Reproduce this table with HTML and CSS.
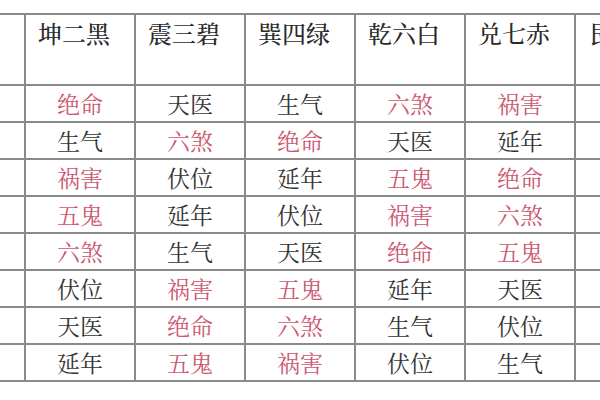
FILE: index.html
```html
<!DOCTYPE html>
<html lang="zh">
<head>
<meta charset="utf-8">
<link rel="stylesheet" href="styles.css">
</head>
<body>
<div class="sheet">
<table class="grid">
<colgroup>
<col class="c"><col class="c"><col class="c"><col class="c"><col class="c"><col class="c"><col class="c">
</colgroup>
<thead>
<tr class="head"><th></th><th>坤二黑</th><th>震三碧</th><th>巽四绿</th><th>乾六白</th><th>兑七赤</th><th>艮八白</th></tr>
</thead>
<tbody>
<tr><td></td><td class="bad">绝命</td><td>天医</td><td>生气</td><td class="bad">六煞</td><td class="bad">祸害</td><td></td></tr>
<tr><td></td><td>生气</td><td class="bad">六煞</td><td class="bad">绝命</td><td>天医</td><td>延年</td><td></td></tr>
<tr><td></td><td class="bad">祸害</td><td>伏位</td><td>延年</td><td class="bad">五鬼</td><td class="bad">绝命</td><td></td></tr>
<tr><td></td><td class="bad">五鬼</td><td>延年</td><td>伏位</td><td class="bad">祸害</td><td class="bad">六煞</td><td></td></tr>
<tr><td></td><td class="bad">六煞</td><td>生气</td><td>天医</td><td class="bad">绝命</td><td class="bad">五鬼</td><td></td></tr>
<tr><td></td><td>伏位</td><td class="bad">祸害</td><td class="bad">五鬼</td><td>延年</td><td>天医</td><td></td></tr>
<tr><td></td><td>天医</td><td class="bad">绝命</td><td class="bad">六煞</td><td>生气</td><td>伏位</td><td></td></tr>
<tr><td></td><td>延年</td><td class="bad">五鬼</td><td class="bad">祸害</td><td>伏位</td><td>生气</td><td></td></tr>
</tbody>
</table>
</div>
</body>
</html>
```
FILE: styles.css
```css
html, body {
  margin: 0;
  padding: 0;
  background: #fff;
}
.sheet {
  width: 600px;
  height: 400px;
  overflow: hidden;
  padding-top: 13px;
  box-sizing: border-box;
}
.grid {
  margin-left: -86px;
  border-collapse: collapse;
  table-layout: fixed;
  width: 770px;
  font-family: "Noto Serif CJK SC", "Noto Sans CJK SC", serif;
  color: #333;
}
.grid .c {
  width: 110px;
}
.grid th, .grid td {
  border: 2px solid #8a8a8a;
  padding: 0;
  text-align: center;
  white-space: nowrap;
  overflow: hidden;
}
.grid th {
  height: 71px;
  vertical-align: top;
  font-weight: 500;
  font-size: 24px;
  line-height: 28px;
  padding: 4px 12px 0 0;
  box-sizing: border-box;
  color: #2a2a2a;
}
.grid td {
  height: 35px;
  font-size: 23px;
  line-height: 26px;
  vertical-align: middle;
}
.grid td.bad {
  color: #cc5770;
}
```
